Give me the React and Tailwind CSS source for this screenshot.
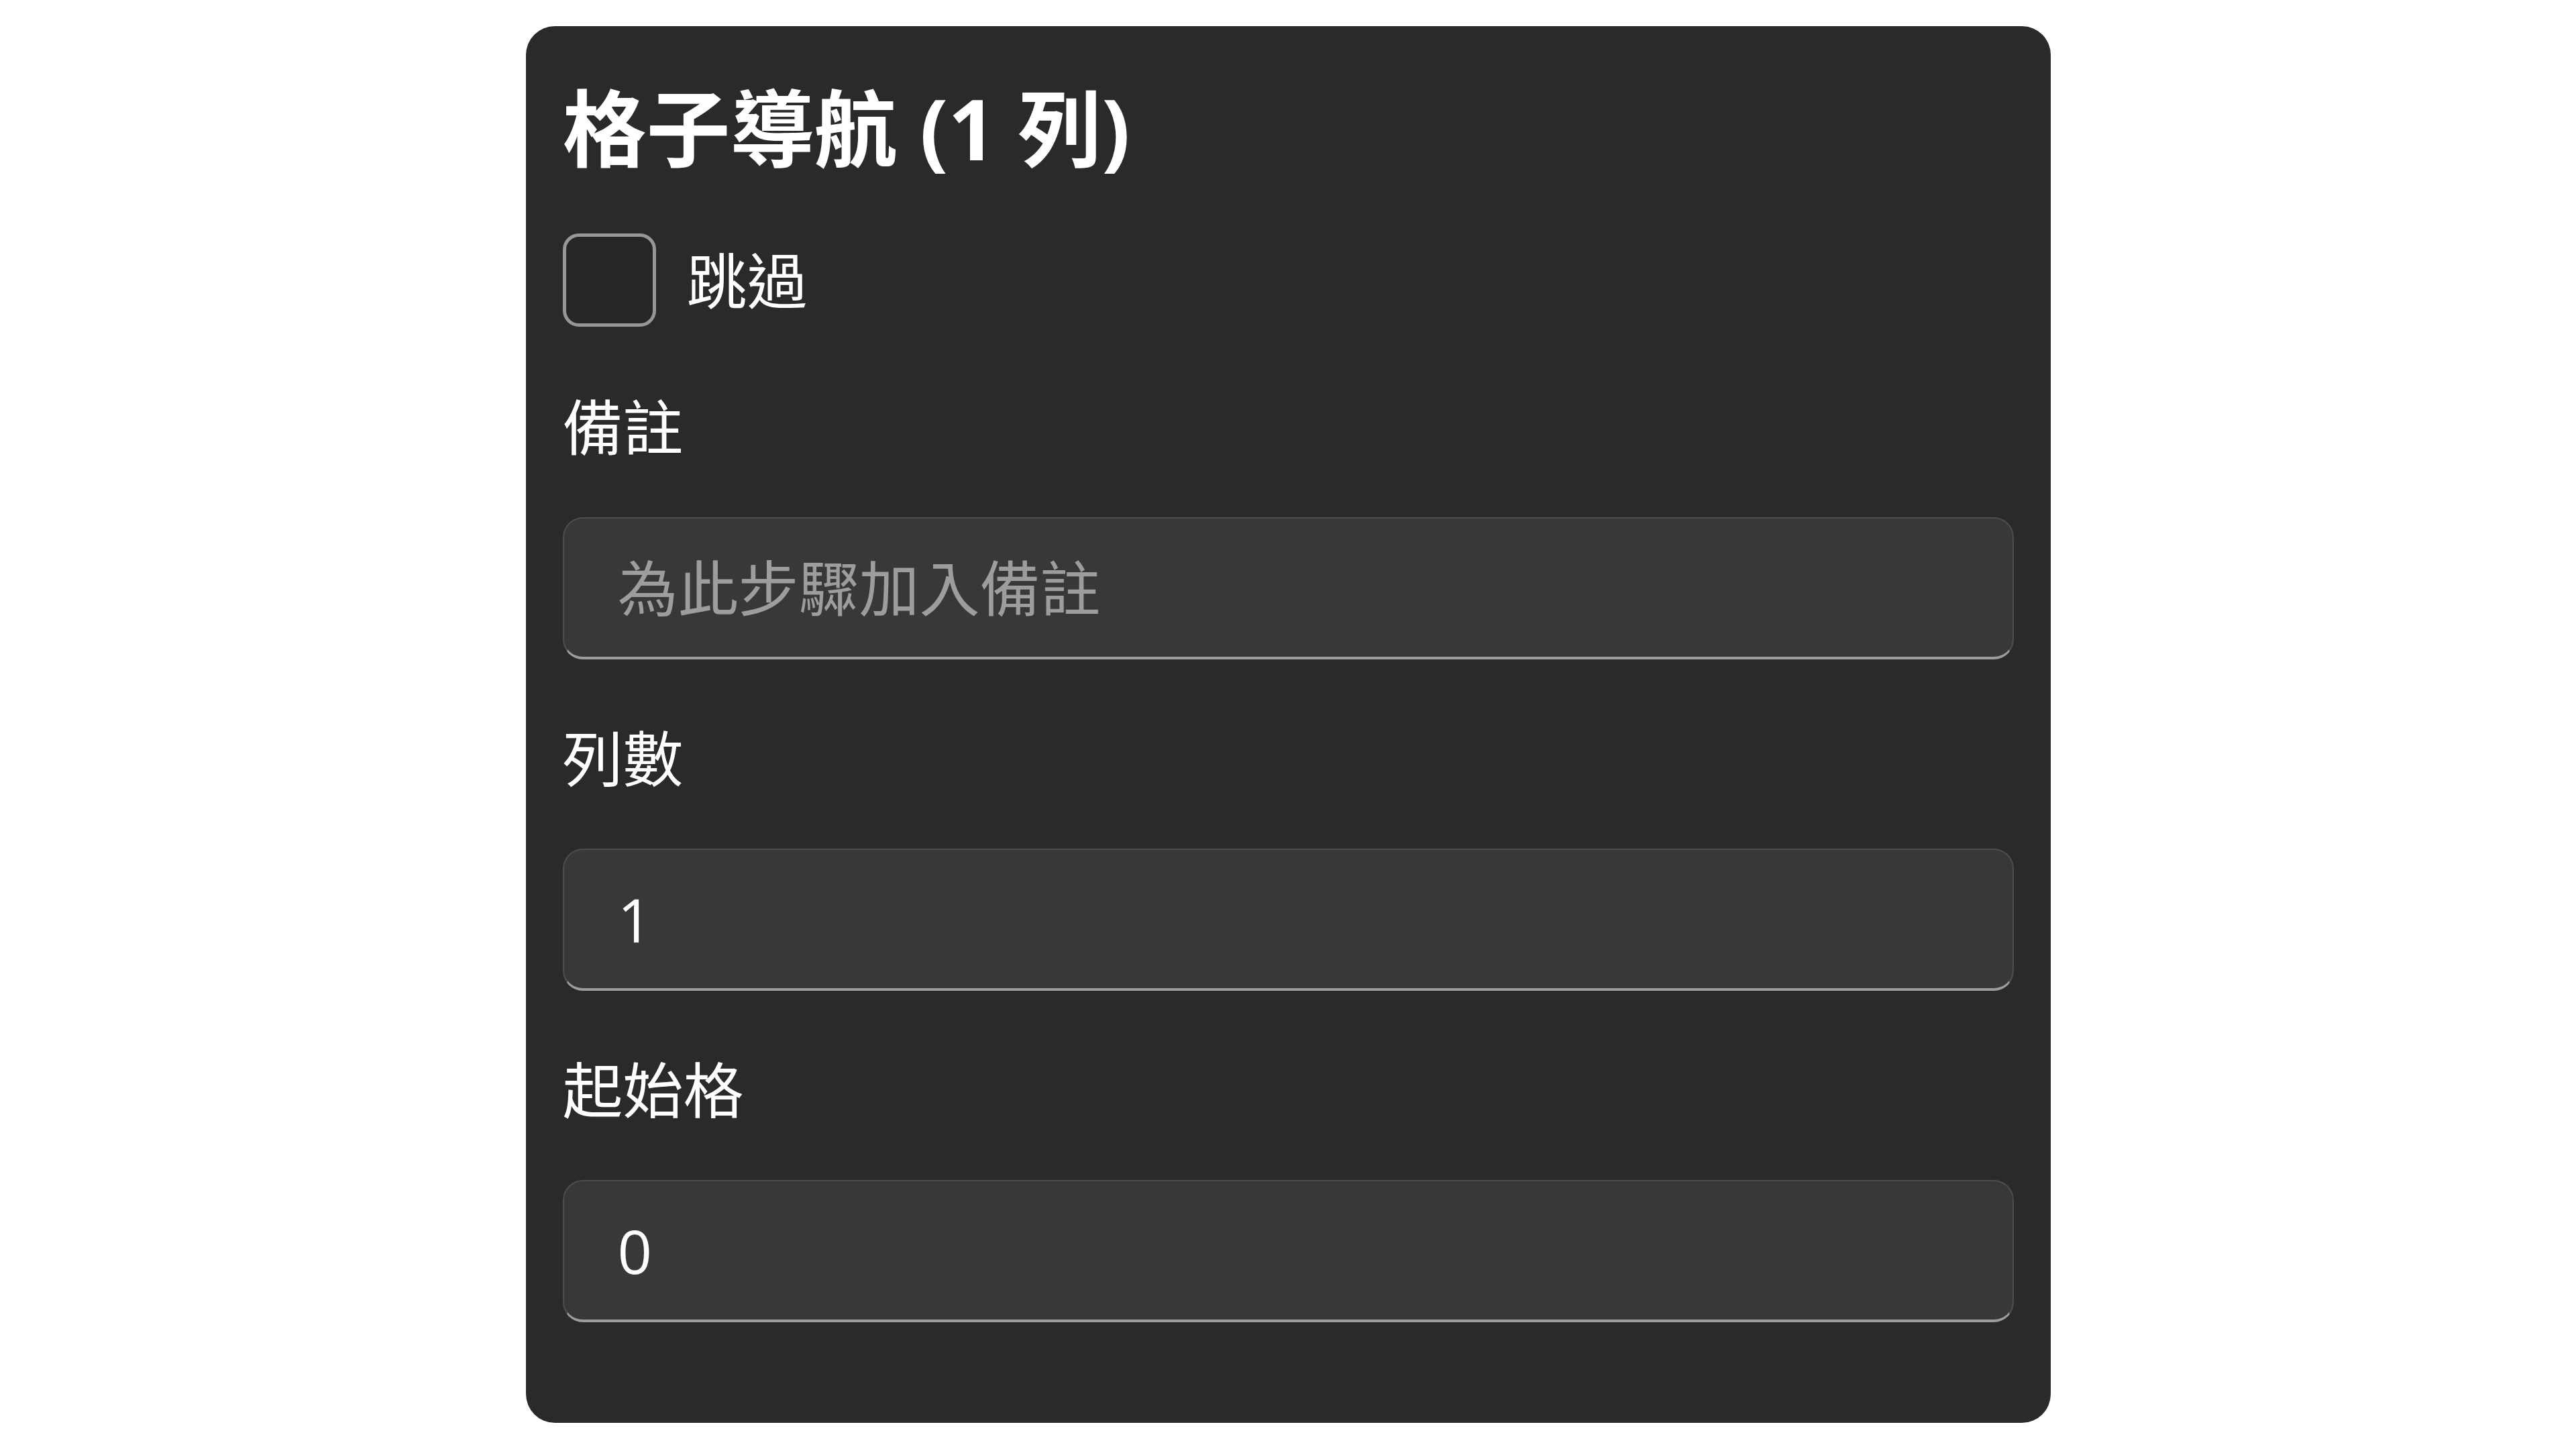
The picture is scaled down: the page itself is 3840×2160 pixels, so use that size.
import React from 'react';

const fontStack = { fontFamily: '"Segoe UI", "Open Sans", "Noto Sans CJK TC", sans-serif' };

const Field = ({ label, value, placeholder }) => (
    <div className="flex flex-col">
        <label className="text-[90px] leading-[126px] text-white">{label}</label>
        <input
            type="text"
            readOnly
            value={value}
            placeholder={placeholder}
            style={fontStack}
            className="mt-[72px] h-[212px] w-full rounded-[30px] border-2 border-[#4d4d4d] border-b-[4px] border-b-[#9c9c9c] bg-[#383838] pl-[80px] pr-[40px] text-[90px] text-white outline-none placeholder:text-[#9d9d9d]"
        />
    </div>
);

export default function App() {
    return (
        <div className="min-h-screen w-full bg-white pt-[39px]" style={fontStack}>
            <div className="mx-auto flex w-[2273px] flex-col rounded-[43px] bg-[#2a2a2a] px-[55px] pt-[56px] pb-[150px]">
                <h2 className="text-[125px] font-bold leading-[192px] text-white">格子導航 (1 列)</h2>

                {/* Skip toggle */}
                <div className="mt-[61px] flex items-center gap-[46px]">
                    <div className="h-[139px] w-[139px] rounded-[24px] border-[5px] border-[#979797] bg-[#262626]" />
                    <span className="text-[90px] leading-[126px] text-white">跳過</span>
                </div>

                <div className="mt-[86px] flex flex-col gap-[84px]">
                    <Field label="備註" value="" placeholder="為此步驟加入備註" />
                    <Field label="列數" value="1" />
                    <Field label="起始格" value="0" />
                </div>
            </div>
        </div>
    );
}
